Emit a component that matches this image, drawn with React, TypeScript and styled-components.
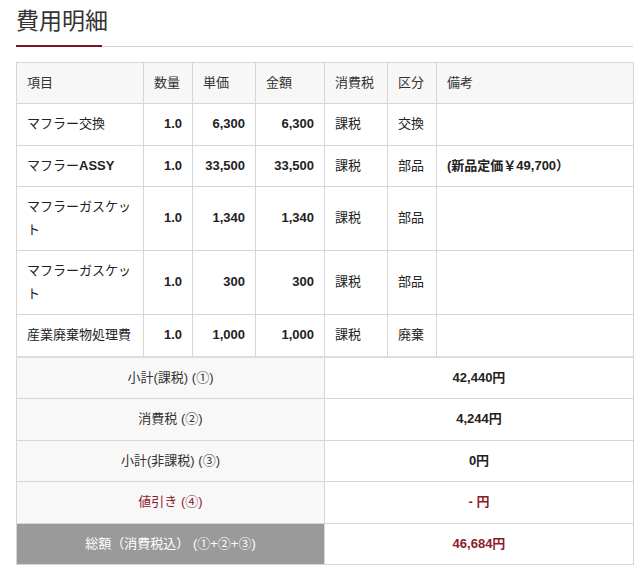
import React from "react";
import styled, { createGlobalStyle } from "styled-components";

const Global = createGlobalStyle`
  html, body { margin: 0; padding: 0; background: #fff; }
  body { font-family: "Liberation Sans", "Noto Sans CJK JP", sans-serif; color: #333; }
`;

const Page = styled.div`
  padding: 4px 7px 0 16px;
`;

const TitleBar = styled.div`
  position: relative;
  border-bottom: 1px solid #cfcfcf;
  padding-bottom: 8px;
  margin-bottom: 15px;
  &::after {
    content: "";
    position: absolute;
    left: 0;
    bottom: -1px;
    width: 86px;
    height: 2px;
    background: #7a1424;
  }
`;

const Title = styled.h2`
  margin: 0;
  font-size: 23px;
  line-height: 34px;
  font-weight: 400;
  color: #333;
`;

const Table = styled.table`
  width: 617px;
  border-collapse: collapse;
  table-layout: fixed;
  font-size: 13px;
  border: 1px solid #d6d6d6;
`;

const Th = styled.th`
  background: #f7f7f7;
  border: 1px solid #d6d6d6;
  font-weight: 400;
  text-align: left;
  padding: 9px 10px;
  line-height: 22px;
  color: #333;
`;

const Td = styled.td<{ $align?: "left" | "right" | "center"; $bold?: boolean }>`
  border: 1px solid #d6d6d6;
  padding: 9px 10px;
  line-height: 22.5px;
  text-align: ${(p) => p.$align || "left"};
  font-weight: ${(p) => (p.$bold ? 700 : 400)};
  color: #222;
  vertical-align: middle;
`;

const LastRow = styled.tr`
  & > td { border-bottom: 2px solid #dcdcdc; }
`;

const SumLabel = styled.td<{ $red?: boolean; $total?: boolean }>`
  border: 1px solid #d6d6d6;
  background: ${(p) => (p.$total ? "#9a9a9a" : "#f8f8f8")};
  color: ${(p) => (p.$total ? "#fff" : p.$red ? "#8c1c2c" : "#333")};
  text-align: center;
  padding: 9px 10px;
  line-height: 22.5px;
  font-weight: 400;
`;

const SumValue = styled.td<{ $red?: boolean }>`
  border: 1px solid #d6d6d6;
  background: #fff;
  color: ${(p) => (p.$red ? "#8c1c2c" : "#222")};
  text-align: center;
  padding: 9px 10px;
  line-height: 22.5px;
  font-weight: 700;
`;

const B = styled.b`
  font-weight: 700;
`;

type Row = { name: React.ReactNode; qty: string; unit: string; amount: string; tax: string; kind: string; note?: React.ReactNode };

const rows: Row[] = [
  { name: "マフラー交換", qty: "1.0", unit: "6,300", amount: "6,300", tax: "課税", kind: "交換" },
  { name: <>マフラー<B>ASSY</B></>, qty: "1.0", unit: "33,500", amount: "33,500", tax: "課税", kind: "部品", note: <B>(新品定価￥49,700）</B> },
  { name: "マフラーガスケット", qty: "1.0", unit: "1,340", amount: "1,340", tax: "課税", kind: "部品" },
  { name: "マフラーガスケット", qty: "1.0", unit: "300", amount: "300", tax: "課税", kind: "部品" },
  { name: "産業廃棄物処理費", qty: "1.0", unit: "1,000", amount: "1,000", tax: "課税", kind: "廃棄" },
];

const sums = [
  { label: "小計(課税) (①)", value: "42,440円" },
  { label: "消費税 (②)", value: "4,244円" },
  { label: "小計(非課税) (③)", value: "0円" },
  { label: "値引き (④)", value: "- 円", red: true },
];

export default function App() {
  return (
    <Page>
      <Global />
      <TitleBar>
        <Title>費用明細</Title>
      </TitleBar>
      <Table>
        <colgroup>
          <col style={{ width: 127 }} />
          <col style={{ width: 49 }} />
          <col style={{ width: 63 }} />
          <col style={{ width: 69 }} />
          <col style={{ width: 63 }} />
          <col style={{ width: 49 }} />
          <col style={{ width: 197 }} />
        </colgroup>
        <thead>
          <tr>
            <Th>項目</Th>
            <Th>数量</Th>
            <Th>単価</Th>
            <Th>金額</Th>
            <Th>消費税</Th>
            <Th>区分</Th>
            <Th>備考</Th>
          </tr>
        </thead>
        <tbody>
          {rows.map((r, i) => {
            const cells = (
              <>
                <Td>{r.name}</Td>
                <Td $align="right" $bold>{r.qty}</Td>
                <Td $align="right" $bold>{r.unit}</Td>
                <Td $align="right" $bold>{r.amount}</Td>
                <Td>{r.tax}</Td>
                <Td>{r.kind}</Td>
                <Td>{r.note}</Td>
              </>
            );
            return i === rows.length - 1 ? <LastRow key={i}>{cells}</LastRow> : <tr key={i}>{cells}</tr>;
          })}
          {sums.map((s, i) => (
            <tr key={"s" + i}>
              <SumLabel colSpan={4} $red={s.red}>{s.label}</SumLabel>
              <SumValue colSpan={3} $red={s.red}>{s.value}</SumValue>
            </tr>
          ))}
          <tr>
            <SumLabel colSpan={4} $total>総額（消費税込） (①+②+③)</SumLabel>
            <SumValue colSpan={3} $red>46,684円</SumValue>
          </tr>
        </tbody>
      </Table>
    </Page>
  );
}
